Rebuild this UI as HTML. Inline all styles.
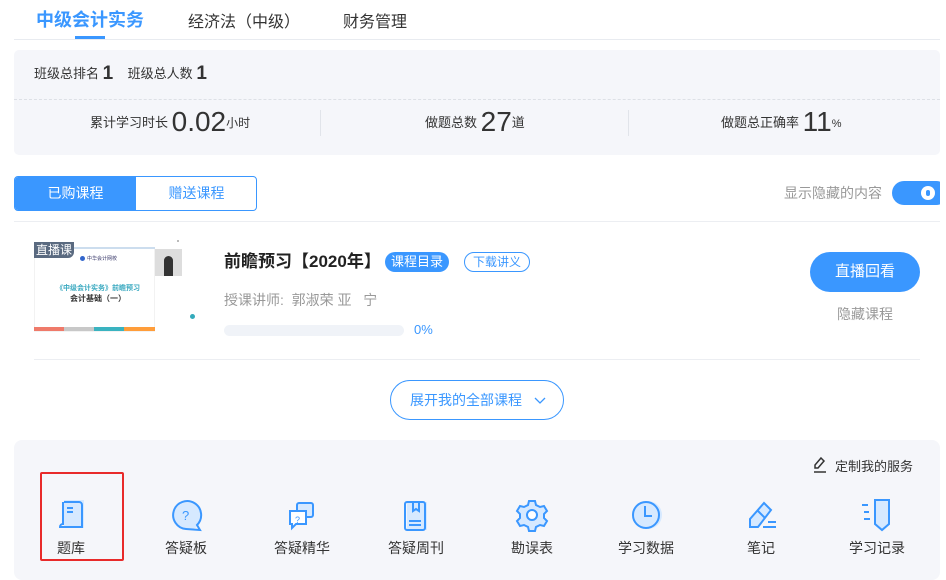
<!DOCTYPE html>
<html><head><meta charset="utf-8"><style>
*{margin:0;padding:0;box-sizing:border-box}
body{width:946px;height:575px;overflow:hidden;background:#fff;font-family:"Liberation Sans","Noto Sans CJK SC",sans-serif;color:#333;position:relative}
.a{position:absolute;white-space:nowrap}
.ic{position:absolute;top:497px;width:34px;height:36px}
.lb{position:absolute;top:538px;font-size:14px;color:#333;width:100px;text-align:center}
</style></head><body>
<div class="a" style="left:36px;top:6px;font-size:18px;font-weight:bold;color:#3a97ff">中级会计实务</div>
<div class="a" style="left:188px;top:8px;font-size:16px;color:#333">经济法（中级）</div>
<div class="a" style="left:343px;top:8px;font-size:16px;color:#333">财务管理</div>
<div class="a" style="left:75px;top:36px;width:30px;height:3px;background:#3a97ff"></div>
<div class="a" style="left:14px;top:39px;width:926px;height:1px;background:#e8ebf0"></div>

<div class="a" style="left:14px;top:50px;width:926px;height:105px;background:#f5f6fa;border-radius:5px"></div>
<div class="a" style="left:14px;top:99px;width:926px;border-top:1px dashed #dde0e6"></div>
<div class="a" style="left:34px;top:63px;font-size:13px"><span>班级总排名</span> <span style="font-size:19px;font-weight:bold;vertical-align:-1px">1</span>&nbsp;&nbsp;&nbsp;&nbsp;<span>班级总人数</span> <span style="font-size:19px;font-weight:bold;vertical-align:-1px">1</span></div>
<div class="a" style="left:320px;top:110px;width:1px;height:26px;background:#e1e4ea"></div>
<div class="a" style="left:628px;top:110px;width:1px;height:26px;background:#e1e4ea"></div>
<div class="a" style="left:90px;top:106px;font-size:13px">累计学习时长 <span style="font-size:28px;vertical-align:-4px">0.02</span><span style="font-size:12px">小时</span></div>
<div class="a" style="left:425px;top:106px;font-size:13px">做题总数 <span style="font-size:28px;vertical-align:-4px">27</span>道</div>
<div class="a" style="left:721px;top:106px;font-size:13px">做题总正确率 <span style="font-size:28px;vertical-align:-4px">11</span><span style="font-size:11px">%</span></div>

<div class="a" style="left:14px;top:176px;width:243px;height:35px;border:1px solid #3a97ff;border-radius:4px;overflow:hidden">
<div class="a" style="left:0;top:0;width:121px;height:33px;background:#3a97ff;color:#fff;font-size:14px;text-align:center;line-height:33px">已购课程</div>
<div class="a" style="left:121px;top:0;width:121px;height:33px;color:#3a97ff;font-size:14px;text-align:center;line-height:33px">赠送课程</div></div>
<div class="a" style="left:784px;top:183px;font-size:14px;color:#999">显示隐藏的内容</div>
<div class="a" style="left:892px;top:181px;width:48px;height:24px;overflow:hidden"><div style="position:absolute;left:0;top:0;width:56px;height:24px;border-radius:12px;background:#3a97ff"></div><div style="position:absolute;left:29px;top:5px;width:14px;height:14px;border-radius:7px;background:#fff"></div><div style="position:absolute;left:34px;top:9px;width:4px;height:6px;border-radius:2px;background:#3a97ff"></div></div>
<div class="a" style="left:14px;top:221px;width:926px;height:1px;background:#eceef2"></div>

<div class="a" style="left:34px;top:247px;width:121px;height:85px;background:#fff;border:1px solid #f2f2f2"></div>
<div class="a" style="left:74px;top:247px;width:81px;height:2px;background:#cde"></div>
<div class="a" style="left:34px;top:242px;width:40px;height:16px;background:#5a6a80;color:#fff;font-size:12px;line-height:16px;text-align:center;border-radius:0 0 6px 0">直播课</div>
<div class="a" style="left:80px;top:256px;width:5px;height:5px;border-radius:3px;background:#36c"></div>
<div class="a" style="left:87px;top:255px;font-size:5px;color:#336">中华会计网校</div>
<div class="a" style="left:56px;top:283px;font-size:7px;color:#3aa9c0;font-weight:bold">《中级会计实务》前瞻预习</div>
<div class="a" style="left:70px;top:293px;font-size:8px;color:#333;font-weight:bold">会计基础（一）</div>
<div class="a" style="left:155px;top:249px;width:27px;height:27px;background:#ddd"></div>
<div class="a" style="left:164px;top:256px;width:9px;height:20px;background:#333;border-radius:5px 5px 0 0"></div>
<div class="a" style="left:177px;top:240px;width:2px;height:2px;background:#bbb"></div>
<div class="a" style="left:190px;top:314px;width:5px;height:5px;border-radius:3px;background:#3ab"></div>
<div class="a" style="left:34px;top:327px;width:30px;height:4px;background:#ef7a6a"></div>
<div class="a" style="left:64px;top:327px;width:30px;height:4px;background:#c8c8c8"></div>
<div class="a" style="left:94px;top:327px;width:30px;height:4px;background:#3ab3c0"></div>
<div class="a" style="left:124px;top:327px;width:31px;height:4px;background:#ff9d3a"></div>

<div class="a" style="left:224px;top:247px;font-size:17px;font-weight:bold;color:#222">前瞻预习【2020年】</div>
<div class="a" style="left:385px;top:252px;width:64px;height:20px;border-radius:10px;background:#3a97ff;color:#fff;font-size:13px;line-height:20px;text-align:center">课程目录</div>
<div class="a" style="left:464px;top:252px;width:66px;height:20px;border-radius:10px;border:1px solid #3a97ff;color:#3a97ff;font-size:12px;line-height:18px;text-align:center">下载讲义</div>
<div class="a" style="left:224px;top:290px;font-size:14px;color:#999">授课讲师:&nbsp; 郭淑荣 亚&nbsp;&nbsp; 宁</div>
<div class="a" style="left:224px;top:325px;width:180px;height:11px;border-radius:6px;background:#f0f3f8"></div>
<div class="a" style="left:414px;top:322px;font-size:13px;color:#3a97ff">0%</div>
<div class="a" style="left:810px;top:252px;width:110px;height:40px;border-radius:20px;background:#3a97ff;color:#fff;font-size:15px;line-height:40px;text-align:center">直播回看</div>
<div class="a" style="left:837px;top:304px;font-size:14px;color:#999">隐藏课程</div>
<div class="a" style="left:34px;top:359px;width:886px;height:1px;background:#eceef2"></div>
<div class="a" style="left:390px;top:380px;width:174px;height:40px;border-radius:20px;border:1px solid #3a97ff;color:#3a97ff;font-size:14px;line-height:38px;padding-left:19px">展开我的全部课程 <svg width="12" height="8" style="margin-left:8px" viewBox="0 0 12 8"><path d="M1 1l5 5 5-5" stroke="#3a97ff" stroke-width="1.3" fill="none"/></svg></div>

<div class="a" style="left:14px;top:440px;width:926px;height:140px;background:#f5f6fa;border-radius:8px"></div>
<svg class="a" style="left:812px;top:456px" width="16" height="18" viewBox="0 0 16 18"><path d="M9 2l3 3-6 7H3V9z" stroke="#333" stroke-width="1.5" fill="none"/><path d="M2 16h12" stroke="#333" stroke-width="1.5"/></svg>
<div class="a" style="left:835px;top:456px;font-size:13px;color:#333">定制我的服务</div>
<div class="a" style="left:40px;top:472px;width:84px;height:89px;border:2px solid #e82a2a;border-radius:2px"></div>

<svg class="ic" style="left:54px" viewBox="0 0 34 36"><rect x="10" y="3" width="20" height="28" fill="#d6e9ff"/><path d="M10 5h15a3 3 0 0 1 3 3v22H6a3 3 0 0 1 3-3V5" stroke="#3a97ff" stroke-width="2" fill="none"/><path d="M13 11h6M13 15h6" stroke="#3a97ff" stroke-width="2"/></svg>
<svg class="ic" style="left:169px" viewBox="0 0 34 36"><circle cx="19" cy="19" r="14" fill="#d6e9ff"/><path d="M17 32A14 14 0 1 1 28 28l3 5z" stroke="#3a97ff" stroke-width="2" fill="none"/><text x="13" y="23" font-size="13" fill="#3a97ff" font-family="Liberation Sans">?</text></svg>
<svg class="ic" style="left:285px" viewBox="0 0 34 36"><rect x="12" y="6" width="16" height="14" rx="2" fill="#d6e9ff" stroke="#3a97ff" stroke-width="2"/><path d="M5 14h16v13H11l-4 4v-4H5z" fill="#fff" stroke="#3a97ff" stroke-width="2"/><text x="10" y="26" font-size="9" fill="#3a97ff" font-family="Liberation Sans">?</text></svg>
<svg class="ic" style="left:399px" viewBox="0 0 34 36"><rect x="8" y="5" width="20" height="28" fill="#d6e9ff"/><rect x="6" y="5" width="20" height="28" rx="2" stroke="#3a97ff" stroke-width="2" fill="none"/><path d="M14 5v9l3-2 3 2V5M10 24h12M10 28h12" stroke="#3a97ff" stroke-width="2" fill="none"/></svg>
<svg class="ic" style="left:515px" viewBox="0 0 34 36"><path d="M14 4h6l1 4 4 2 4-1 3 5-3 3v4l3 3-3 5-4-1-4 2-1 4h-6l-1-4-4-2-4 1-3-5 3-3v-4L2 14l3-5 4 1 4-2z" fill="#d6e9ff" stroke="#3a97ff" stroke-width="2"/><circle cx="17" cy="18" r="5" fill="#fff" stroke="#3a97ff" stroke-width="2"/></svg>
<svg class="ic" style="left:629px" viewBox="0 0 34 36"><circle cx="19" cy="18" r="14" fill="#d6e9ff"/><circle cx="17" cy="18" r="13" stroke="#3a97ff" stroke-width="2" fill="none"/><path d="M16 9v10h7" stroke="#3a97ff" stroke-width="2" fill="none"/></svg>
<svg class="ic" style="left:744px" viewBox="0 0 34 36"><path d="M6 22L20 6l7 7-13 17H6z" fill="#d6e9ff" stroke="#3a97ff" stroke-width="2"/><path d="M14 14l7 7M19 30h13M24 25h8" stroke="#3a97ff" stroke-width="2"/></svg>
<svg class="ic" style="left:860px" viewBox="0 0 34 36"><path d="M15 3h14v24l-7 6-7-6z" fill="#d6e9ff" stroke="#3a97ff" stroke-width="2"/><path d="M2 8h6M4 15h5M4 22h6" stroke="#3a97ff" stroke-width="2"/></svg>

<div class="lb" style="left:21px">题库</div>
<div class="lb" style="left:136px">答疑板</div>
<div class="lb" style="left:252px">答疑精华</div>
<div class="lb" style="left:366px">答疑周刊</div>
<div class="lb" style="left:482px">勘误表</div>
<div class="lb" style="left:596px">学习数据</div>
<div class="lb" style="left:711px">笔记</div>
<div class="lb" style="left:827px">学习记录</div>
</body></html>
